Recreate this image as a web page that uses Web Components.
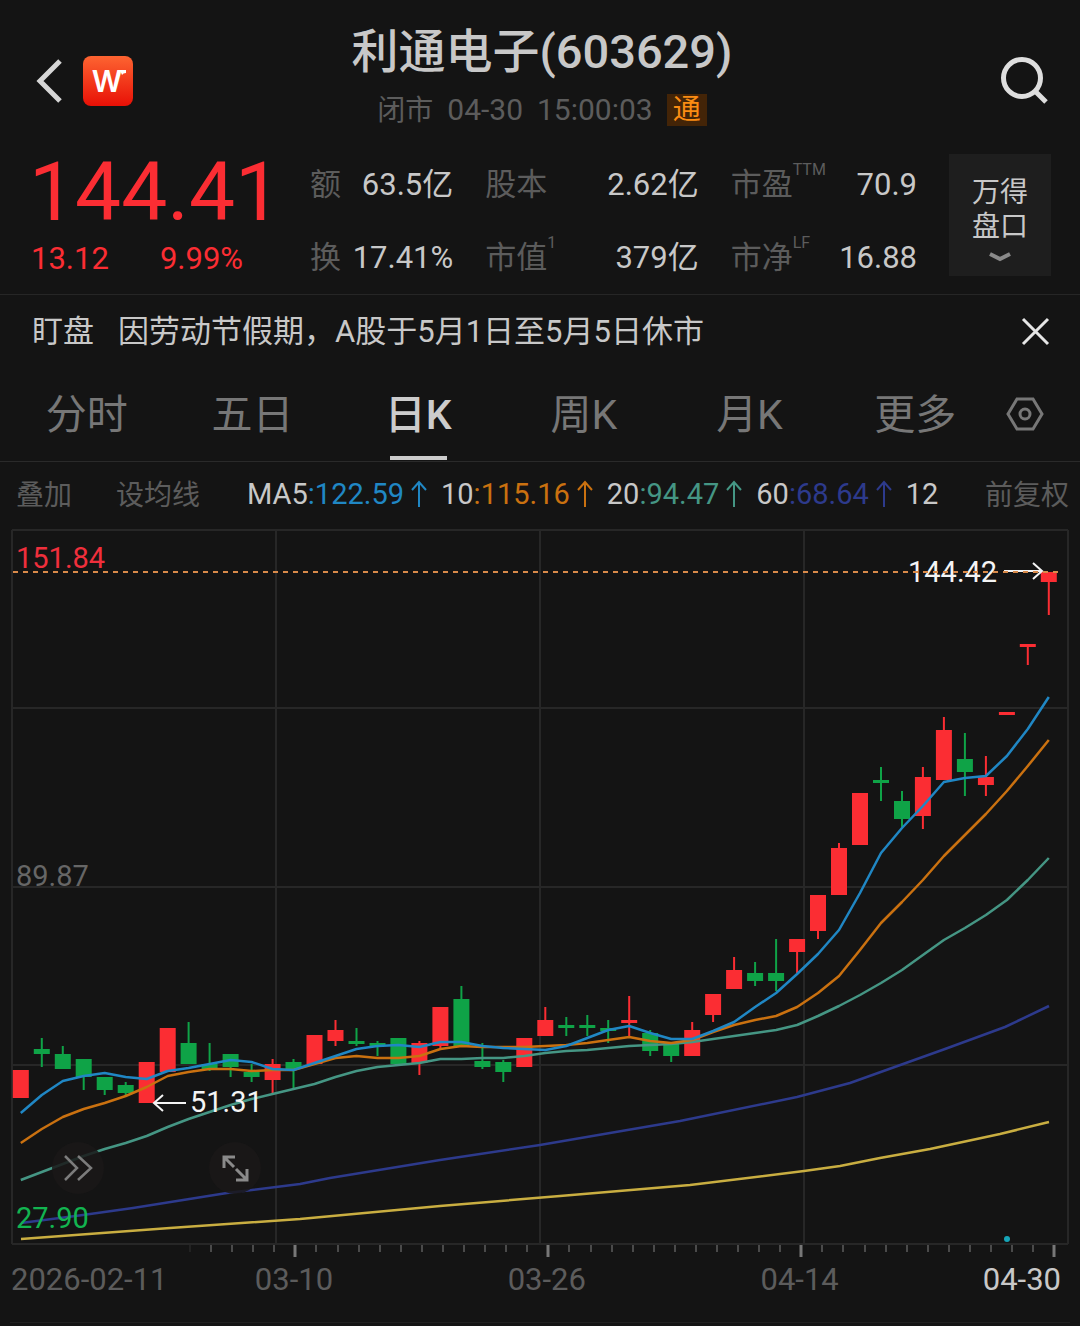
<!DOCTYPE html>
<html lang="zh-CN">
<head>
<meta charset="UTF-8">
<meta name="viewport" content="width=device-width, initial-scale=1">
<title>利通电子(603629)</title>
<style>
    body {
        margin: 0;
        background: #141414;
        color: #c8c8c8;
        font-family: Roboto, "Noto Sans CJK SC", sans-serif;
        --up: #fb2d33;
        --down: #0fa347;
        --muted: #5c5c5c;
        --line: #262626;
    }
</style>
</head>
<body>
<stock-header>
    <span slot="title">利通电子(603629)</span>
    <span slot="status">闭市</span>
    <span slot="date">04-30</span>
    <span slot="time">15:00:03</span>
    <span slot="badge">通</span>
</stock-header>
<quote-panel price="144.41" change="13.12" percent="9.99%">
    <quote-stat value="63.5亿">额</quote-stat>
    <quote-stat value="2.62亿">股本</quote-stat>
    <quote-stat value="70.9" note="TTM">市盈</quote-stat>
    <quote-stat value="17.41%">换</quote-stat>
    <quote-stat value="379亿" note="1">市值</quote-stat>
    <quote-stat value="16.88" note="LF">市净</quote-stat>
</quote-panel>
<notice-bar label="盯盘">因劳动节假期，A股于5月1日至5月5日休市</notice-bar>
<period-tabs></period-tabs>
<ma-bar></ma-bar>
<k-chart></k-chart>
<date-axis></date-axis>

<script>
const resetButton = `
    button { margin: 0; padding: 0; border: 0; background: none; color: inherit; font: inherit; cursor: pointer; }
    svg { display: block; }
`;

class StockHeader extends HTMLElement {
    constructor() {
        super();
        this.attachShadow({ mode: "open" });
    }

    connectedCallback() {
        this.shadowRoot.innerHTML = `
            <style>
                ${resetButton}
                :host { display: block; padding: 8px 32px 0 36px; }
                header { display: grid; grid-template-columns: 1fr auto 1fr; align-items: center; }
                .left { display: flex; align-items: center; gap: 21px; }
                .middle { padding: 10px 0 26px; text-align: center; }
                h1 { margin: 0; font-size: 47px; line-height: 68px; font-weight: 500; }
                .sub { display: flex; justify-content: center; align-items: center; gap: 14px; margin-top: 6px; font-size: 30px; line-height: 36px; color: var(--muted); }
                .status { padding-top: 2px; font-size: 28px; line-height: 34px; }
                .badge { padding: 0 6px; background: #432407; color: #fb8c13; font-size: 28px; line-height: 32px; }
                .search { justify-self: end; }
            </style>
            <header>
                <div class="left">
                    <button aria-label="返回">
                        <svg width="26" height="44" viewBox="0 0 26 44" fill="none" stroke="#d6d6d6" stroke-width="5"><path d="M24 2 4 22 24 42"/></svg>
                    </button>
                    <button aria-label="万得">
                        <svg width="50" height="50" viewBox="0 0 50 50">
                            <defs><linearGradient id="g" x1="0" y1="0" x2="0" y2="1"><stop offset="0" stop-color="#fd6431"/><stop offset="1" stop-color="#e81006"/></linearGradient></defs>
                            <rect width="50" height="50" rx="8" fill="url(#g)"/>
                            <text x="24" y="36" text-anchor="middle" font-family="Inter, sans-serif" font-weight="600" font-size="30" fill="#fff">W</text>
                            <path d="M37 14h6v3q-3 0-4 2z" fill="#fff"/>
                        </svg>
                    </button>
                </div>
                <div class="middle">
                    <h1><slot name="title"></slot></h1>
                    <div class="sub">
                        <span class="status"><slot name="status"></slot></span>
                        <slot name="date"></slot>
                        <slot name="time"></slot>
                        <span class="badge"><slot name="badge"></slot></span>
                    </div>
                </div>
                <button class="search" aria-label="搜索">
                    <svg width="48" height="50" viewBox="0 0 48 50" fill="none" stroke="#dedede" stroke-width="5"><circle cx="22" cy="22" r="18.5"/><path d="m34 34 12 12"/></svg>
                </button>
            </header>
        `;
    }
}

class QuoteStat extends HTMLElement {
    constructor() {
        super();
        this.attachShadow({ mode: "open" });
    }

    connectedCallback() {
        const note = this.getAttribute("note");
        this.shadowRoot.innerHTML = `
            <style>
                :host { display: flex; justify-content: space-between; font-size: 31px; line-height: 60px; white-space: nowrap; }
                .label { color: var(--muted); }
                sup { font-size: 16px; line-height: 0; vertical-align: 20px; }
            </style>
            <span class="label"><slot></slot>${note ? `<sup>${note}</sup>` : ""}</span>
            <span>${this.getAttribute("value")}</span>
        `;
    }
}

class QuotePanel extends HTMLElement {
    constructor() {
        super();
        this.attachShadow({ mode: "open" });
    }

    connectedCallback() {
        this.shadowRoot.innerHTML = `
            <style>
                ${resetButton}
                :host { display: grid; grid-template-columns: 281px 1fr 134px; align-items: start; padding: 0 29px 6px; border-bottom: 1px solid var(--line); }
                .price { color: var(--up); }
                .now { font-size: 82px; line-height: 76px; }
                .change { display: flex; gap: 51px; font-size: 31px; line-height: 58px; padding-left: 2px; }
                .stats { display: grid; grid-template-columns: 143fr 213fr 186fr; gap: 13px 32px; padding-top: 1px; }
                .more { justify-self: end; display: flex; flex-direction: column; align-items: center; width: 102px; padding: 22px 20px 13px; background: #1e1e1e; font-size: 28px; line-height: 34px; }
                .more svg { margin-top: 7px; }
            </style>
            <div class="price">
                <div class="now">${this.getAttribute("price")}</div>
                <div class="change"><span>${this.getAttribute("change")}</span><span>${this.getAttribute("percent")}</span></div>
            </div>
            <div class="stats"><slot></slot></div>
            <button class="more">万得<br>盘口
                <svg width="24" height="12" viewBox="0 0 24 12" fill="none" stroke="#8a8a8a" stroke-width="4"><path d="m2 3 10 5 10-5"/></svg>
            </button>
        `;
    }
}

class NoticeBar extends HTMLElement {
    constructor() {
        super();
        this.attachShadow({ mode: "open" });
    }

    connectedCallback() {
        this.shadowRoot.innerHTML = `
            <style>
                ${resetButton}
                :host { display: flex; align-items: center; gap: 24px; padding: 1px 30px 0 32px; font-size: 31px; line-height: 72px; }
                .text { flex: 1; }
            </style>
            <span>${this.getAttribute("label")}</span>
            <span class="text"><slot></slot></span>
            <button aria-label="关闭">
                <svg width="30" height="30" viewBox="0 0 30 30" fill="none" stroke="#e6e6e6" stroke-width="3"><path d="m3 2 25 25M28 2 3 27"/></svg>
            </button>
        `;
        this.shadowRoot.querySelector("button").addEventListener("click", () => this.remove());
    }
}

class PeriodTabs extends HTMLElement {
    constructor() {
        super();
        this.attachShadow({ mode: "open" });
        this.tabs = ["分时", "五日", "日K", "周K", "月K", "更多"];
        this.current = "日K";
    }

    connectedCallback() {
        this.shadowRoot.innerHTML = `
            <style>
                ${resetButton}
                :host { display: flex; align-items: center; padding-left: 4px; border-bottom: 1px solid #2a2a2a; color: #777; }
                nav { flex: 1; display: grid; grid-template-columns: repeat(6, 1fr); }
                nav button { display: flex; flex-direction: column; align-items: center; padding-top: 6px; font-size: 41px; line-height: 82px; }
                nav button::after { content: ""; width: 57px; height: 4px; margin-bottom: 1px; }
                nav .active { color: #ccc; font-weight: 500; }
                nav .active::after { background: #ccc; }
                .settings { width: 82px; padding: 0 0 2px 8px; }
            </style>
            <nav>${this.tabs.map((tab) => `<button class="${tab === this.current ? "active" : ""}">${tab}</button>`).join("")}</nav>
            <button class="settings" aria-label="设置">
                <svg width="38" height="36" viewBox="0 0 38 36" fill="none" stroke="#777" stroke-width="3"><path d="M11 3h16l9 15-9 15H11L2 18z"/><circle cx="19" cy="18" r="5"/></svg>
            </button>
        `;
        this.shadowRoot.querySelectorAll("nav button").forEach((button) => {
            button.addEventListener("click", () => {
                this.shadowRoot.querySelector(".active").classList.remove("active");
                button.classList.add("active");
            });
        });
    }
}

class MaBar extends HTMLElement {
    constructor() {
        super();
        this.attachShadow({ mode: "open" });
        this.items = [
            { name: "MA5", value: "122.59", color: "#2087c4" },
            { name: "10", value: "115.16", color: "#ca7110" },
            { name: "20", value: "94.47", color: "#459684" },
            { name: "60", value: "68.64", color: "#2d3a8c" },
        ];
    }

    connectedCallback() {
        this.shadowRoot.innerHTML = `
            <style>
                ${resetButton}
                :host { display: flex; align-items: center; padding: 0 11px 0 16px; line-height: 64px; font-size: 28px; white-space: nowrap; }
                button { padding-top: 4px; line-height: 60px; color: var(--muted); }
                .overlay { margin-right: 44px; }
                .values { flex: 1; display: flex; gap: 13px; margin-left: 47px; font-size: 29px; }
                .item { display: flex; align-items: center; }
                .item svg { margin-left: 6px; }
            </style>
            <button class="overlay">叠加</button>
            <button>设均线</button>
            <div class="values">
                ${this.items
                    .map(
                        (item) =>
                        `<span class="item">${item.name}<span style="color:${item.color}">:${item.value}</span><svg width="18" height="28" viewBox="0 0 18 28" fill="none" stroke="${item.color}" stroke-width="2"><path d="M9 27V2M2 10l7-8 7 8"/></svg></span>`
                    )
                    .join("")}
                <span>12</span>
            </div>
            <button>前复权</button>
        `;
    }
}

// [方向, 实体上沿, 实体下沿, 最高, 最低]
const candles = [
    ["up", 1070, 1098], ["down", 1049, 1054, 1038, 1067], ["down", 1054, 1069, 1046, 1069], ["down", 1059, 1077, 1059, 1090],
    ["down", 1077, 1090, 1077, 1095], ["down", 1085, 1093, 1082, 1097], ["up", 1062, 1103], ["up", 1028, 1072],
    ["down", 1043, 1064, 1022, 1064], ["down", 1064, 1069, 1043, 1071], ["down", 1054, 1067, 1054, 1077], ["down", 1072, 1077, 1064, 1082],
    ["up", 1064, 1080, 1059, 1093], ["down", 1062, 1069, 1059, 1088], ["up", 1035, 1064], ["up", 1030, 1041, 1020, 1046],
    ["down", 1041, 1043, 1028, 1046], ["down", 1043, 1046, 1041, 1056], ["down", 1038, 1064], ["up", 1043, 1063, 1041, 1075],
    ["up", 1007, 1046, 1007, 1050], ["down", 999, 1046, 986, 1046], ["down", 1061, 1067, 1043, 1069], ["down", 1062, 1072, 1060, 1082],
    ["up", 1038, 1067], ["up", 1020, 1036, 1007, 1036], ["down", 1025, 1027, 1017, 1036], ["down", 1025, 1027, 1015, 1036],
    ["down", 1028, 1030, 1020, 1043], ["up", 1020, 1022, 996, 1036], ["down", 1033, 1051, 1030, 1056], ["down", 1043, 1056, 1043, 1062],
    ["up", 1030, 1056, 1022, 1056], ["up", 994, 1015, 994, 1022], ["up", 970, 989, 957, 989], ["down", 973, 981, 962, 986],
    ["down", 973, 981, 939, 991], ["up", 939, 952, 939, 973], ["up", 895, 931, 895, 939], ["up", 848, 895, 843, 895],
    ["up", 793, 845], ["down", 780, 782, 767, 801], ["down", 801, 819, 791, 827], ["up", 777, 816, 767, 829],
    ["up", 730, 780, 717, 780], ["down", 759, 772, 733, 796], ["up", 777, 785, 756, 796], ["up", 712, 715],
    ["up", 644, 647, 644, 665], ["up", 572, 582, 572, 615],
];

const averages = [
    { color: "#2087c4", ys: [1113, 1095, 1081, 1076, 1073, 1077, 1079, 1071, 1068, 1064, 1060, 1062, 1069, 1070, 1063, 1056, 1049, 1046, 1045, 1047, 1042, 1042, 1046, 1048, 1049, 1050, 1046, 1038, 1030, 1026, 1033, 1039, 1039, 1031, 1022, 1007, 993, 974, 954, 930, 893, 853, 828, 806, 782, 778, 776, 756, 729, 697] },
    { color: "#ca7110", ys: [1143, 1129, 1117, 1109, 1103, 1096, 1087, 1076, 1072, 1069, 1069, 1071, 1070, 1070, 1064, 1058, 1056, 1058, 1058, 1056, 1049, 1046, 1047, 1047, 1047, 1046, 1045, 1043, 1040, 1037, 1041, 1043, 1040, 1032, 1025, 1020, 1016, 1007, 993, 976, 950, 923, 902, 880, 856, 835, 814, 791, 766, 740] },
    { color: "#459684", ys: [1180, 1172, 1164, 1156, 1149, 1143, 1136, 1127, 1119, 1112, 1105, 1099, 1094, 1089, 1084, 1077, 1071, 1067, 1065, 1063, 1059, 1059, 1058, 1058, 1056, 1053, 1051, 1050, 1048, 1046, 1045, 1044, 1042, 1039, 1036, 1033, 1030, 1025, 1016, 1006, 995, 983, 970, 955, 940, 928, 915, 900, 880, 858] },
];

const slowLines = [
    { color: "#2d3a8c", points: "21,1223 83,1215 133,1208 227,1193 300,1184 330,1178 440,1160 540,1145 680,1121 797,1097 850,1083 945,1049 1005,1027 1049,1006" },
    { color: "#c9ae41", points: "21,1239 170,1228 300,1219 440,1206 560,1196 690,1185 804,1171 840,1166 880,1158 930,1149 1000,1134 1049,1122" },
];

class KChart extends HTMLElement {
    constructor() {
        super();
        this.attachShadow({ mode: "open" });
    }

    x(i) {
        return Math.round(208 + i * 209.8) / 10;
    }

    drawGrid() {
        const vertical = [12, 276, 540, 804, 1068].map((x) => `<path d="M${x} 530V1244"/>`);
        const horizontal = [530, 708, 887, 1065, 1244].map((y) => `<path d="M12 ${y}H1068"/>`);
        return vertical.concat(horizontal).join("");
    }

    drawTicks() {
        let out = "";
        for (let i = 0; i <= 41; i++) {
            const x = Math.round(190 + i * 21.08);
            const major = i % 12 === 5;
            out += `<path d="M${x} 1245V${major ? 1257 : 1252}" stroke="${i === 0 ? "#222" : major ? "#777" : "#4a4a4a"}" stroke-width="${major ? 3 : 2}"/>`;
        }
        return out;
    }

    drawCandle([dir, top, bottom, high, low], i) {
        const x = this.x(i);
        const wick = high ? `<path d="M${x} ${high}V${low}" stroke="var(--${dir})" stroke-width="2"/>` : "";
        const height = Math.max(bottom - top, 3);
        return `${wick}<rect x="${x - 8}" y="${top}" width="16" height="${height}" fill="var(--${dir})"/>`;
    }

    connectedCallback() {
        this.shadowRoot.innerHTML = `
            <style>
                ${resetButton}
                :host { display: block; position: relative; }
                .chart { width: 100%; height: auto; }
                text { font-size: 29px; }
                button { position: absolute; bottom: 64px; width: 52px; height: 52px; border-radius: 50%; background: rgba(26, 24, 24, 0.85); display: grid; place-items: center; }
                .forward { left: 52px; }
                .expand { left: 209px; }
            </style>
            <svg class="chart" viewBox="0 526 1080 732" fill="none">
                <g stroke="#272727" stroke-width="2">${this.drawGrid()}</g>
                ${this.drawTicks()}
                ${candles.map((c, i) => this.drawCandle(c, i)).join("")}
                <g stroke-width="2.5" stroke-linejoin="round">
                    ${slowLines.map((l) => `<polyline points="${l.points}" stroke="${l.color}"/>`).join("")}
                    ${averages.slice().reverse().map((a) => `<polyline points="${a.ys.map((y, i) => `${this.x(i)},${y}`).join(" ")}" stroke="${a.color}"/>`).join("")}
                </g>
                <text x="16" y="568" fill="#f02f3c">151.84</text>
                <text x="16" y="886" fill="#666">89.87</text>
                <text x="16" y="1228" fill="#12b450">27.90</text>
                <text x="190" y="1112" fill="#f4f4f4">51.31</text>
                <text x="908" y="582" fill="#f4f4f4">144.42</text>
                <g stroke="#f4f4f4" stroke-width="2">
                    <path d="M186 1103H154M163 1095l-9 8 9 8"/>
                    <path d="M1004 571h38M1033 563l9 8-9 8"/>
                </g>
                <path d="M13 572H1062" stroke="#d98a4a" stroke-width="2" stroke-dasharray="5 5"/>
                <circle cx="1007" cy="1239" r="3" fill="#16a5b8"/>
            </svg>
            <button class="forward" aria-label="前进">
                <svg width="30" height="28" viewBox="0 0 30 28" fill="none" stroke="#7c7c7c" stroke-width="2.5"><path d="m2 2 12 12L2 26M15 2l13 12-13 12"/></svg>
            </button>
            <button class="expand" aria-label="全屏">
                <svg width="28" height="28" viewBox="0 0 28 28" fill="none" stroke="#8a8a8a" stroke-width="3"><path d="M3 14V3h11M3 3l10 10M26 15v11H15M26 26 15 15"/></svg>
            </button>
        `;
    }
}

class DateAxis extends HTMLElement {
    constructor() {
        super();
        this.attachShadow({ mode: "open" });
        this.dates = ["2026-02-11", "03-10", "03-26", "04-14", "04-30"];
    }

    connectedCallback() {
        this.shadowRoot.innerHTML = `
            <style>
                :host { display: grid; grid-template-columns: 156fr 253fr 253fr 253fr 135fr; margin: 0 10px; padding: 0 9px 20px 1px; border-bottom: 1px solid #202020; color: var(--muted); font-size: 31px; line-height: 44px; text-align: center; white-space: nowrap; }
                span:last-child { text-align: right; color: #c8c8c8; }
            </style>
            ${this.dates.map((date) => `<span>${date}</span>`).join("")}
        `;
    }
}

customElements.define("stock-header", StockHeader);
customElements.define("quote-stat", QuoteStat);
customElements.define("quote-panel", QuotePanel);
customElements.define("notice-bar", NoticeBar);
customElements.define("period-tabs", PeriodTabs);
customElements.define("ma-bar", MaBar);
customElements.define("k-chart", KChart);
customElements.define("date-axis", DateAxis);
</script>
</body>
</html>
